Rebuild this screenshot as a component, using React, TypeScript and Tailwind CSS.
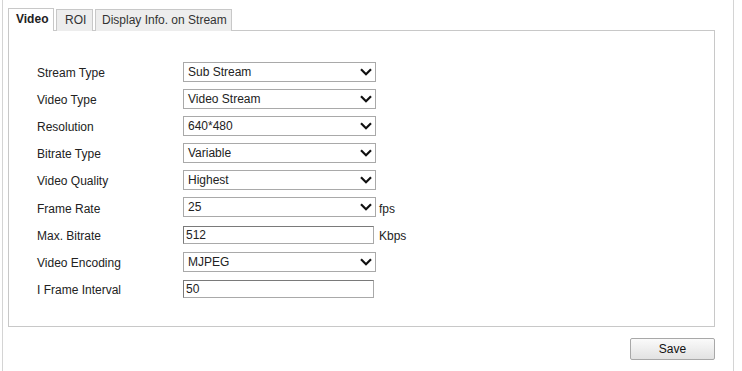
import React from "react";

const Chevron = () => (
  <svg width="12" height="8" viewBox="0 0 12 8" className="absolute right-[3px] top-[5px]">
    <path d="M1 1.2 L6 6.2 L11 1.2" fill="none" stroke="#111" strokeWidth="2.2" />
  </svg>
);

const Select = ({ value }: { value: string }) => (
  <div className="relative w-[193px] h-[20px] border border-[#a9a9a9] bg-white pl-[4px] text-[12px] leading-[18px] text-[#222]">
    {value}
    <Chevron />
  </div>
);

const Input = ({ value }: { value: string }) => (
  <div className="w-[191px] h-[18px] border border-[#a9a9a9] border-t-[#7a7a7a] border-l-[#7a7a7a] bg-white pl-[2px] text-[12px] leading-[16px] text-[#222]">
    {value}
  </div>
);

type Row = { label: string; kind: "select" | "input"; value: string; unit?: string; cls: string };

const rows: Row[] = [
  { label: "Stream Type", kind: "select", value: "Sub Stream", cls: "h-[27px]" },
  { label: "Video Type", kind: "select", value: "Video Stream", cls: "h-[27px]" },
  { label: "Resolution", kind: "select", value: "640*480", cls: "h-[27px]" },
  { label: "Bitrate Type", kind: "select", value: "Variable", cls: "h-[27px]" },
  { label: "Video Quality", kind: "select", value: "Highest", cls: "h-[27px]" },
  { label: "Frame Rate", kind: "select", value: "25", unit: "fps", cls: "h-[28px]" },
  { label: "Max. Bitrate", kind: "input", value: "512", unit: "Kbps", cls: "h-[27px]" },
  { label: "Video Encoding", kind: "select", value: "MJPEG", cls: "h-[27px]" },
  { label: "I Frame Interval", kind: "input", value: "50", cls: "h-[27px]" },
];

export default function App() {
  return (
    <div
      className="w-[742px] h-[371px] bg-white overflow-hidden"
      style={{ fontFamily: '"Liberation Sans", Arial, sans-serif' }}
    >
      <div className="ml-[2px] w-[732px] h-[371px] border-l border-r border-[#d4d4d4] pl-[5px] pr-[18px] pt-[9px]">
        {/* tabs */}
        <div className="flex items-end h-[22px] text-[12px] text-[#333] whitespace-nowrap">
          <div className="h-[23px] w-[46px] pl-[7px] border border-b-0 border-[#c8c8c8] bg-white font-bold leading-[21px] text-[#222] relative z-10">
            Video
          </div>
          <div className="ml-[2px] h-[22px] w-[37px] pl-[8px] border border-b-0 border-[#c8c8c8] bg-[#ededed] leading-[20px]">
            ROI
          </div>
          <div className="ml-[2px] h-[22px] w-[137px] pl-[6px] border border-b-0 border-[#c8c8c8] bg-[#ededed] leading-[20px]">
            Display Info. on Stream
          </div>
        </div>
        {/* content */}
        <div className="w-[707px] h-[297px] -mt-px border border-[#c8c8c8] pt-[27px] pl-[28px]">
          {rows.map((r) => (
            <div key={r.label} className={`flex items-center ${r.cls}`}>
              <div className="w-[146px] pt-[3px] text-[12px] text-[#222]">{r.label}</div>
              {r.kind === "select" ? <Select value={r.value} /> : <Input value={r.value} />}
              {r.unit && (
                <div className={`text-[12px] text-[#222] pt-[3px] ${r.kind === "select" ? "ml-[3px]" : "ml-[5px]"}`}>
                  {r.unit}
                </div>
              )}
            </div>
          ))}
        </div>
        <div className="flex justify-end w-[707px] mt-[11px]">
          <button className="w-[85px] h-[22px] border border-[#a8a8a8] rounded-[2px] bg-gradient-to-b from-[#fafafa] to-[#e2e2e2] text-[12px] text-[#111] leading-[20px]">
            Save
          </button>
        </div>
      </div>
    </div>
  );
}
